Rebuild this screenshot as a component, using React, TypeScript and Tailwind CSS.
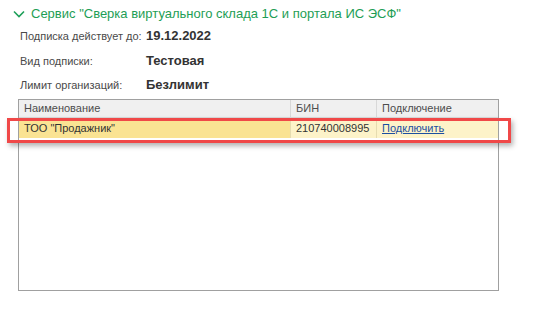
import React from "react";

export default function App() {
  return (
    <div className="w-[557px] h-[327px] bg-white relative overflow-hidden" style={{ fontFamily: '"Liberation Sans", Arial, sans-serif' }}>
      <div className="flex items-center h-[16px] mt-[5px] ml-[13px] gap-[6px]">
        <svg width="12" height="8" viewBox="0 0 12 8" className="mt-[1px]">
          <path d="M1 1.5 L6 6.5 L11 1.5" fill="none" stroke="#1ea05a" strokeWidth="1.6" />
        </svg>
        <span className="text-[13px] text-[#1e9e55] leading-none whitespace-nowrap">Сервис "Сверка виртуального склада 1С и портала ИС ЭСФ"</span>
      </div>
      <div className="flex flex-col ml-[20px] mt-[4px]">
        <div className="flex items-center h-[22px] whitespace-nowrap">
          <span className="w-[126px] text-[11px] text-[#4a4a4a]">Подписка действует до:</span>
          <span className="text-[13px] font-bold text-[#333]">19.12.2022</span>
        </div>
        <div className="flex items-center h-[28px] whitespace-nowrap">
          <span className="w-[126px] text-[11px] text-[#4a4a4a]">Вид подписки:</span>
          <span className="text-[13px] font-bold text-[#333]">Тестовая</span>
        </div>
        <div className="flex items-center h-[20px] whitespace-nowrap">
          <span className="w-[126px] text-[11px] text-[#4a4a4a]">Лимит организаций:</span>
          <span className="text-[13px] font-bold text-[#333]">Безлимит</span>
        </div>
      </div>
      <div className="ml-[18px] mt-[4px] w-[481px] h-[192px] border border-[#a0a0a0] flex flex-col">
        <div className="flex h-[18px] bg-[#f0f0f0] border-b border-[#dadada] text-[11px] text-[#4d4d4d] whitespace-nowrap">
          <div className="w-[272px] pl-[5px] flex items-center border-r border-[#d8d8d8]">Наименование</div>
          <div className="w-[86px] pl-[5px] flex items-center border-r border-[#d8d8d8]">БИН</div>
          <div className="flex-1 pl-[5px] flex items-center">Подключение</div>
        </div>
        <div className="flex h-[20px] text-[11px] text-[#333] whitespace-nowrap">
          <div className="w-[272px] pl-[5px] flex items-center bg-[#fae393] border-r border-[#e6dcb0]">ТОО "Продажник"</div>
          <div className="w-[86px] pl-[5px] flex items-center bg-[#fdf3c9] border-r border-[#e6dcb0]">210740008995</div>
          <div className="flex-1 pl-[5px] flex items-center bg-[#fdf3c9]">
            <span className="text-[#1c4fa0] underline">Подключить</span>
          </div>
        </div>
      </div>
      <div className="absolute left-[7px] top-[118px] w-[504px] h-[25px] border-[3px] border-[#f04848] shadow-[2px_3px_5px_rgba(0,0,0,0.3)]" />
    </div>
  );
}
